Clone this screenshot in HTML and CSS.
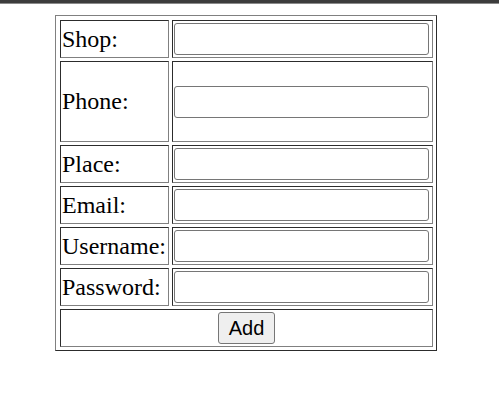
FILE: index.html
```html
<!DOCTYPE html>
<html>
<head>
<meta charset="utf-8">
<title>Add Shop</title>
<link rel="stylesheet" href="styles.css">
</head>
<body>
<div class="topbar"></div>
<form class="shop-form">
  <table class="form-table">
    <tr>
      <td class="label">Shop:</td>
      <td class="field"><input type="text" class="text-input"></td>
    </tr>
    <tr class="tall">
      <td class="label">Phone:</td>
      <td class="field"><input type="text" class="text-input"></td>
    </tr>
    <tr>
      <td class="label">Place:</td>
      <td class="field"><input type="text" class="text-input"></td>
    </tr>
    <tr>
      <td class="label">Email:</td>
      <td class="field"><input type="text" class="text-input"></td>
    </tr>
    <tr>
      <td class="label">Username:</td>
      <td class="field"><input type="text" class="text-input"></td>
    </tr>
    <tr>
      <td class="label">Password:</td>
      <td class="field"><input type="password" class="text-input"></td>
    </tr>
    <tr>
      <td class="actions" colspan="2"><button type="button" class="add-btn">Add</button></td>
    </tr>
  </table>
</form>
</body>
</html>
```
FILE: styles.css
```css
html, body {
  margin: 0;
  padding: 0;
  background: #ffffff;
}

body {
  font-family: "Liberation Serif", "Times New Roman", serif;
  font-size: 24px;
  color: #000;
}

.topbar {
  height: 3px;
  background: #3c3c3c;
  border-bottom: 1px solid #8a8a8a;
}

.shop-form {
  margin: 11px 0 0 55px;
}

.form-table {
  border: 1px outset grey;
  border-spacing: 3px;
  padding: 1px 0 0 1px;
}

.form-table td {
  border: 1px inset grey;
  padding: 2px 1px;
  vertical-align: middle;
}

.label {
  width: 105px;
  white-space: nowrap;
}

.field {
  width: 257px;
  padding-left: 2px;
}

.tall td {
  height: 75px;
}

.text-input {
  display: block;
  box-sizing: border-box;
  width: 255px;
  height: 32px;
  margin: 0;
  border: 1px solid #767676;
  border-radius: 3px;
  padding: 0 3px;
  font-family: "Liberation Sans", Arial, sans-serif;
  font-size: 20px;
  background: #fff;
}

.actions {
  text-align: center;
}

.add-btn {
  box-sizing: border-box;
  height: 32px;
  padding: 0 10px;
  margin: 0;
  font-family: "Liberation Sans", Arial, sans-serif;
  font-size: 20px;
  color: #000;
  background: #efefef;
  border: 1px solid #767676;
  border-radius: 3px;
  vertical-align: middle;
}
```
